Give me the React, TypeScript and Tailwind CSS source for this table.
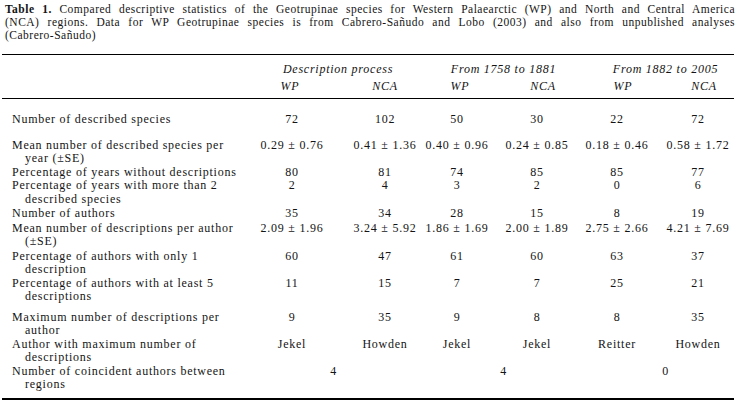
const cols = "grid grid-cols-[244px_92px_83px_76px_80px_80px_77px]";

// per-column shifts so each value sits where the reference puts it
const valueCls = ["", "pl-[11px]", "pr-[4px]", "", "", "pl-[5px]"];
const subHeadCls = ["pr-[4px]", "pl-[11px]", "pl-[2px]", "pl-[12px]", "pl-[12px]", "pl-[17px]"];

const rows = [
  { label: ["Number of described species"], values: ["72", "102", "50", "30", "22", "72"], pt: "pt-[14px]" },
  {
    label: ["Mean number of described species per", "year (±SE)"],
    values: ["0.29 ± 0.76", "0.41 ± 1.36", "0.40 ± 0.96", "0.24 ± 0.85", "0.18 ± 0.46", "0.58 ± 1.72"],
    pt: "pt-[12px]",
  },
  { label: ["Percentage of years without descriptions"], values: ["80", "81", "74", "85", "85", "77"], pt: "pt-0" },
  {
    label: ["Percentage of years with more than 2", "described species"],
    values: ["2", "4", "3", "2", "0", "6"],
    pt: "pt-0",
  },
  { label: ["Number of authors"], values: ["35", "34", "28", "15", "8", "19"], pt: "pt-px" },
  {
    label: ["Mean number of descriptions per author", "(±SE)"],
    values: ["2.09 ± 1.96", "3.24 ± 5.92", "1.86 ± 1.69", "2.00 ± 1.89", "2.75 ± 2.66", "4.21 ± 7.69"],
    pt: "pt-px",
  },
  {
    label: ["Percentage of authors with only 1", "description"],
    values: ["60", "47", "61", "60", "63", "37"],
    pt: "pt-px",
  },
  {
    label: ["Percentage of authors with at least 5", "descriptions"],
    values: ["11", "15", "7", "7", "25", "21"],
    pt: "pt-0",
  },
  {
    label: ["Maximum number of descriptions per", "author"],
    values: ["9", "35", "9", "8", "8", "35"],
    pt: "pt-[7px]",
  },
  {
    label: ["Author with maximum number of", "descriptions"],
    values: ["Jekel", "Howden", "Jekel", "Jekel", "Reitter", "Howden"],
    pt: "pt-0",
  },
];

function Label({ lines }: { lines: string[] }) {
  return (
    <div className="pl-[10px] whitespace-nowrap">
      <div>{lines[0]}</div>
      {lines[1] && <div className="pl-[13px]">{lines[1]}</div>}
    </div>
  );
}

export default function App() {
  return (
    <div className="min-h-[402px] w-[744px] bg-white font-['Liberation_Serif',serif] text-[#141414]">
      {/* Caption */}
      <div className="ml-[5px] w-[730px] pt-[3px] text-[11.5px] leading-[13px] tracking-[0.5px]">
        <div className="whitespace-nowrap text-justify [text-align-last:justify]">
          <span className="font-bold">Table 1.</span> Compared descriptive statistics of the Geotrupinae species for
          Western Palaearctic (WP) and North and Central America
        </div>
        <div className="whitespace-nowrap text-justify [text-align-last:justify]">
          (NCA) regions. Data for WP Geotrupinae species is from Cabrero-Sañudo and Lobo (2003) and also from
          unpublished analyses
        </div>
        <div className="whitespace-nowrap">(Cabrero-Sañudo)</div>
      </div>

      {/* Table */}
      <div className="ml-[2px] mt-[12px] w-[732px] text-[12px] leading-[13.5px] tracking-[0.75px]">
        <div className="h-px bg-black" />

        {/* Group headings */}
        <div className={`${cols} pt-[8px] italic`}>
          <div />
          <div className="col-span-2 flex justify-center whitespace-nowrap pl-[9px]">Description process</div>
          <div className="col-span-2 flex justify-center whitespace-nowrap pl-[9px]">From 1758 to 1881</div>
          <div className="col-span-2 flex justify-center whitespace-nowrap pl-[20px]">From 1882 to 2005</div>
        </div>
        <div className={`${cols} pt-[3px] pb-[5px] italic`}>
          <div />
          {["WP", "NCA", "WP", "NCA", "WP", "NCA"].map((h, i) => (
            <div key={i} className={`flex justify-center ${subHeadCls[i]}`}>
              {h}
            </div>
          ))}
        </div>
        <div className="h-px bg-black" />

        {/* Body */}
        {rows.map((row, r) => (
          <div key={r} className={`${cols} ${row.pt}`}>
            <Label lines={row.label} />
            {row.values.map((v, i) => (
              <div key={i} className={`flex justify-center whitespace-nowrap ${valueCls[i]}`}>
                {v}
              </div>
            ))}
          </div>
        ))}

        <div className={`${cols} pt-0 pb-[6px]`}>
          <Label lines={["Number of coincident authors between", "regions"]} />
          <div className="col-span-2 flex justify-center">4</div>
          <div className="col-span-2 flex justify-center pl-[9px]">4</div>
          <div className="col-span-2 flex justify-center pl-[20px]">0</div>
        </div>
        <div className="h-[2px] bg-black" />
      </div>
    </div>
  );
}
